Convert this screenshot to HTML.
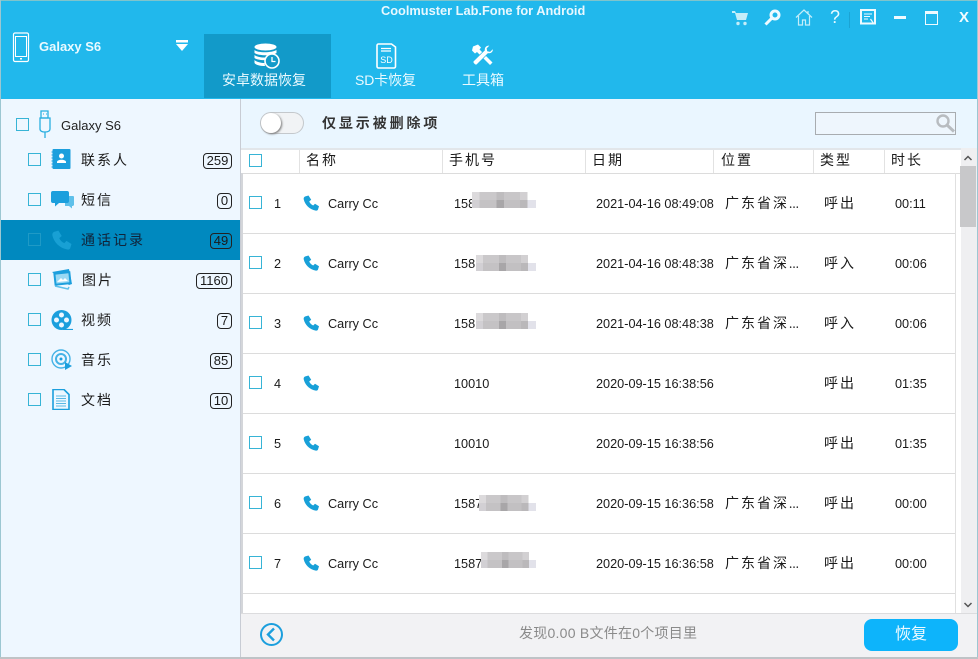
<!DOCTYPE html>
<html><head><meta charset="utf-8">
<style>
html,body{margin:0;padding:0;width:978px;height:659px;overflow:hidden;background:#c8ccd0}
body{font-family:"Liberation Sans","WenQuanYi Zen Hei","Noto Sans CJK SC",sans-serif;color:#1a1a1a;position:relative}
div,span,svg{position:absolute}
.t{white-space:nowrap;line-height:18px}
.cn{font-size:14px;letter-spacing:2px;font-family:"WenQuanYi Zen Hei","Noto Sans CJK SC",sans-serif;margin-top:1px}
.cn i{font-style:normal;letter-spacing:0;font-size:12px}
.h{margin-top:0}
.cb{width:11px;height:11px;border:1px solid #37b4d6;background:#fff}
.cbs{background:transparent}
.bd{height:14px;border:1px solid #222;border-radius:4px;font-size:13px;line-height:14px;text-align:center;background:transparent;box-sizing:content-box}
.l{height:1px;left:243px;width:712px;background:#dcdcdc}
.v{top:150px;width:1px;height:23px;background:#e2e2e2}
.d{font-size:12.7px;margin-top:1px}
.tb{color:#eafaff;font-size:14px;margin-top:1px}
.blur{height:16px;background:linear-gradient(90deg,#dcdadc 0 12%,#cac8ca 12% 38%,#bebcbe 38% 50%,#c8c6c8 50% 75%,#d2d0d2 75% 87%,#fff 87%) top/100% 8px no-repeat,linear-gradient(90deg,#d2d0d4 0 12%,#c4c2c4 12% 38%,#a8a6a8 38% 50%,#c2c0c2 50% 75%,#bab8ba 75% 87%,#e2e2ea 87%) bottom/100% 8px no-repeat}
</style></head><body>
<!-- window -->
<div style="left:0;top:0;width:978px;height:657px;background:#fff"></div>
<div style="left:0;top:0;width:978px;height:99px;background:#21b8ec"></div>
<div style="left:0;top:0;width:978px;height:1px;background:#7fc4cc"></div>
<div style="left:204px;top:34px;width:127px;height:64px;background:#129ac9"></div>
<div class="t" style="left:381px;top:2px;color:#e8f8ff;font-size:12.8px;font-weight:bold">Coolmuster Lab.Fone for Android</div>

<!-- device -->
<svg style="left:12px;top:32px" width="18" height="31" viewBox="0 0 18 31" fill="none" stroke="#fff"><rect x="1.500" y="1" width="15" height="28.500" rx="1.500" stroke-width="1.200"/><rect x="3.500" y="4.500" width="11" height="20" stroke-width="1"/><rect x="8" y="26" width="2" height="1.500" fill="#fff" stroke="none"/></svg>
<div class="t" style="left:39px;top:38px;color:#eafaff;font-size:13px;font-weight:bold">Galaxy S6</div>
<svg style="left:175px;top:39px" width="14" height="14"><rect x="1" y="1" width="12" height="2.500" fill="#fff"/><path d="M1 5h12l-6 7z" fill="#fff"/></svg>

<!-- tabs -->
<svg style="left:254px;top:43px" width="26" height="26" viewBox="0 0 26 26"><ellipse cx="11.500" cy="4" rx="11" ry="3.500" fill="#fff"/><path d="M.5 7c3 3 17 3 22 0v3c-4 3-18 3-22 0zM.5 12c3 2.500 10 3 14 2l-2 3c-5 .5-10-.5-12-2zM.5 17c2 2 7 3 10 3l.5 3c-5 0-9-1-10.500-3z" fill="#fff"/><circle cx="18" cy="18" r="7" fill="#129ac9" stroke="#fff" stroke-width="1.600"/><path d="M18 14v4.500h3.500" fill="none" stroke="#fff" stroke-width="1.300"/></svg>
<div class="t tb" style="left:222px;top:70px">安卓数据恢复</div>
<svg style="left:376px;top:43px" width="21" height="26" viewBox="0 0 21 26" fill="none" stroke="#fff"><path d="M2.500 1h13l4 3v19.500a1.500 1.500 0 0 1-1.500 1.500H2.500A1.500 1.500 0 0 1 1 23.500V2.500A1.500 1.500 0 0 1 2.500 1z" stroke-width="1.600"/><path d="M5 5.500h10M5 8h10" stroke-width="1.200"/><text x="10.500" y="20" font-size="9" fill="#fff" stroke="none" text-anchor="middle" font-family="Liberation Sans">SD</text></svg>
<div class="t tb" style="left:355px;top:70px;letter-spacing:-.1px">SD卡恢复</div>
<svg style="left:471px;top:43px" width="24" height="24" viewBox="0 0 24 24"><path d="M2 3.500l5-2 3 3-1.500 2 13 13-2.500 2.500-13-13-2 1.500-3-3z" fill="#fff"/><path d="M22 5.500l-3 3-2.500-.5-.5-2.500 3-3c-3-.8-6 1.200-5.500 4.800L2.500 18c-1.500 1.500 2 5 3.500 3.500L17 10.500c3.500.7 5.800-2 5-5z" fill="#fff" stroke="#21b8ec" stroke-width=".7"/></svg>
<div class="t tb" style="left:462px;top:70px">工具箱</div>

<!-- window icons -->
<svg style="left:731px;top:10px" width="18" height="16" viewBox="0 0 18 16" fill="#c4edf9"><path d="M1 1h3l1 2h12l-2 7H6L4 3H1z"/><circle cx="7" cy="13.500" r="1.700"/><circle cx="14" cy="13.500" r="1.700"/></svg>
<svg style="left:764px;top:9px" width="17" height="17" viewBox="0 0 17 17"><circle cx="11" cy="6" r="4" fill="none" stroke="#eefaff" stroke-width="3"/><path d="M8 9L1.500 15.500" stroke="#eefaff" stroke-width="3"/></svg>
<svg style="left:795px;top:9px" width="18" height="17" viewBox="0 0 18 17" fill="none" stroke="#c4edf9" stroke-width="1.200"><path d="M1 8.500L9 1l8 7.500M3.500 7v9h4v-5h3v5h4V7M13 2v3"/></svg>
<div class="t" style="left:830px;top:7px;color:#eafaff;font-size:18px;line-height:20px">?</div>
<div style="left:849px;top:12px;width:1px;height:16px;background:#1ba4d4"></div>
<svg style="left:860px;top:9px" width="16" height="16" viewBox="0 0 16 16"><rect x="1" y="1" width="14" height="13.500" fill="none" stroke="#eefaff" stroke-width="2"/><path d="M4 5h8M4 7.500h6M4 10h4" stroke="#eefaff" stroke-width="1"/><path d="M10.500 10l3.500 5" stroke="#eefaff" stroke-width="1.200"/></svg>
<div style="left:894px;top:16px;width:12px;height:3px;background:#eefaff"></div>
<div style="left:925px;top:11px;width:11px;height:10px;border:1px solid #eefaff;border-top:3px solid #eefaff"></div>
<div class="t" style="left:959px;top:9px;color:#f2fcff;font-size:15px;font-weight:bold">X</div>

<!-- left border -->
<div style="left:0;top:0;width:1px;height:657px;background:#9cc7d2"></div>
<div style="left:977px;top:0;width:1px;height:657px;background:#9cc7d2"></div>

<!-- sidebar -->
<div style="left:1px;top:99px;width:239px;height:558px;background:#eef7ff"></div>
<div style="left:240px;top:99px;width:1px;height:558px;background:#c8ccd4"></div>
<div class="cb cbs" style="left:16px;top:118px"></div>
<svg style="left:38px;top:110px" width="15" height="29" viewBox="0 0 15 29" fill="none" stroke="#28aee0" stroke-width="1.300"><path d="M3 1h7v7H3z"/><path d="M2 8h10v11c0 2-2 3-5 3s-5-1-5-3z"/><path d="M7 22v6"/><path d="M5 4h.8M8 4h.8"/></svg>
<div class="t" style="left:61px;top:117px;font-size:13px;color:#222">Galaxy S6</div>

<div style="left:1px;top:220px;width:239px;height:40px;background:#0089bf"></div>

<div class="cb cbs" style="left:28px;top:153px"></div>
<svg style="left:51px;top:149px" width="21" height="21" viewBox="0 0 21 21"><rect x="1.500" y="0" width="18" height="20" rx="1" fill="#1c9fdd"/><path d="M.5 3h2M.5 6h2M.5 9h2M.5 12h2M.5 15h2M.5 18h2" stroke="#1c9fdd"/><circle cx="10.500" cy="7" r="2.500" fill="#fff"/><path d="M6 13c0-3 9-3 9 0v1H6z" fill="#fff"/></svg>
<div class="t cn" style="left:81px;top:150px">联系人</div>
<div class="bd" style="left:203px;top:153px;width:27px">259</div>

<div class="cb cbs" style="left:28px;top:193px"></div>
<svg style="left:51px;top:190px" width="23" height="19" viewBox="0 0 23 19"><path d="M14 6h8a1 1 0 0 1 1 1v8l-1 1h-1v2.500L18 16h-4z" fill="#5ec0ea"/><path d="M2 1h14a2 2 0 0 1 2 2v8a2 2 0 0 1-2 2H8l-4 3.500V13H2a2 2 0 0 1-2-2V3a2 2 0 0 1 2-2z" fill="#1c9fdd"/></svg>
<div class="t cn" style="left:81px;top:190px">短信</div>
<div class="bd" style="left:217px;top:193px;width:13px">0</div>

<div class="cb cbs" style="left:28px;top:233px;border-color:#1f9ac6"></div>
<svg style="left:51px;top:230px" width="21" height="20" viewBox="0 0 16 16"><path d="M2 1.500l3.500-1 2.700 4.300-2 1.700c.8 1.800 2.200 3.200 4 4l1.800-1.800 4 2.500-1 3.300c-.4 1-1.300 1.300-2.300 1.100C6.500 14.500 2 10 .7 4.300.5 3 1 2 2 1.500z" fill="#18a0d4"/></svg>
<div class="t cn" style="left:81px;top:230px;color:#10243a">通话记录</div>
<div class="bd" style="left:210px;top:233px;width:20px">49</div>

<div class="cb cbs" style="left:28px;top:273px"></div>
<svg style="left:51px;top:269px" width="22" height="21" viewBox="0 0 22 21"><path d="M1 3l17-3 3 15-3 1z" fill="#1c9fdd"/><rect x="3" y="3" width="17" height="13" transform="rotate(-6 11 10)" fill="#1c9fdd"/><rect x="5" y="5" width="13" height="9" transform="rotate(-6 11 10)" fill="#9ad9f4"/><path d="M6 13l4-4 2 2 2-2 3 3z" fill="#fff"/><path d="M4 17l13 3 1-2" fill="none" stroke="#5ec0ea" stroke-width="1.500"/></svg>
<div class="t cn" style="left:82px;top:270px">图片</div>
<div class="bd" style="left:196px;top:273px;width:34px">1160</div>

<div class="cb cbs" style="left:28px;top:313px"></div>
<svg style="left:51px;top:310px" width="22" height="20" viewBox="0 0 22 20"><circle cx="10.500" cy="10" r="10" fill="#1c9fdd"/><circle cx="10.500" cy="5" r="2.500" fill="#eef7ff"/><circle cx="10.500" cy="15" r="2.500" fill="#eef7ff"/><circle cx="5.500" cy="10" r="2.500" fill="#eef7ff"/><circle cx="15.500" cy="10" r="2.500" fill="#eef7ff"/><path d="M12 19.500h10" stroke="#1c9fdd" stroke-width="1.200"/></svg>
<div class="t cn" style="left:81px;top:310px">视频</div>
<div class="bd" style="left:217px;top:313px;width:13px">7</div>

<div class="cb cbs" style="left:28px;top:353px"></div>
<svg style="left:51px;top:349px" width="22" height="22" viewBox="0 0 22 22" fill="none" stroke="#45b3e6"><circle cx="10" cy="10" r="9" stroke-width="1.400"/><circle cx="10" cy="10" r="5" stroke-width="2"/><circle cx="10" cy="10" r="1.500" fill="#1c9fdd" stroke="none"/><path d="M14 13l7 4-7 4z" fill="#1c9fdd" stroke="none"/></svg>
<div class="t cn" style="left:81px;top:350px">音乐</div>
<div class="bd" style="left:210px;top:353px;width:20px">85</div>

<div class="cb cbs" style="left:28px;top:393px"></div>
<svg style="left:52px;top:389px" width="18" height="21" viewBox="0 0 18 21"><path d="M1 .5h11l5 5V20.500H1z" fill="#eef7ff" stroke="#1c9fdd" stroke-width="1.600"/><path d="M4 7h10M4 9.500h10M4 12h10M4 14.500h10M4 17h10" stroke="#5ab8e4"/></svg>
<div class="t cn" style="left:81px;top:390px">文档</div>
<div class="bd" style="left:210px;top:393px;width:20px">10</div>

<!-- toolbar -->
<div style="left:241px;top:99px;width:736px;height:49px;background:#eaf6ff"></div>
<div style="left:260px;top:112px;width:42px;height:20px;border:1px solid #c4c8cc;border-radius:11px;background:#f1f3f5"></div>
<div style="left:261px;top:113px;width:20px;height:20px;border-radius:50%;background:#fff;box-shadow:1px 1px 2px #777"></div>
<div class="t" style="left:322px;top:114px;font-size:14px;font-weight:bold;letter-spacing:2.900px;color:#333;font-family:'Noto Sans CJK SC',sans-serif">仅显示被删除项</div>
<div style="left:815px;top:112px;width:139px;height:21px;border:1px solid #a8acb0;background:#eef6fd"></div>
<svg style="left:935px;top:113px" width="21" height="20" viewBox="0 0 21 20" fill="none" stroke="#b8bcc0"><circle cx="8" cy="8" r="5.500" stroke-width="2.400"/><path d="M12 12l7 6.500" stroke-width="3"/></svg>

<!-- grid -->
<div style="left:241px;top:148px;width:736px;height:466px;background:#fff"></div>
<div style="left:241px;top:148px;width:720px;height:2px;background:#e2e6ea"></div>
<div style="left:241px;top:173px;width:2px;height:441px;background:#d4d6da"></div>
<div class="l" style="top:173px;left:243px;width:718px"></div>
<div class="v" style="left:299px"></div><div class="v" style="left:442px"></div><div class="v" style="left:585px"></div><div class="v" style="left:713px"></div><div class="v" style="left:813px"></div><div class="v" style="left:884px"></div>
<div class="cb" style="left:249px;top:154px"></div>
<div class="t cn h" style="left:306px;top:151px">名称</div>
<div class="t cn h" style="left:449px;top:151px">手机号</div>
<div class="t cn h" style="left:592px;top:151px">日期</div>
<div class="t cn h" style="left:721px;top:151px">位置</div>
<div class="t cn h" style="left:820px;top:151px">类型</div>
<div class="t cn h" style="left:891px;top:151px">时长</div>

<div class="l" style="top:233px"></div><div class="l" style="top:293px"></div><div class="l" style="top:353px"></div><div class="l" style="top:413px"></div><div class="l" style="top:473px"></div><div class="l" style="top:533px"></div><div class="l" style="top:593px"></div>
<div style="left:955px;top:173px;width:1px;height:441px;background:#e0e0e0"></div>

<!-- row1 -->
<div class="cb" style="left:249px;top:196px"></div><div class="t d" style="left:274px;top:194px">1</div>
<svg style="left:303px;top:195px" width="16" height="16" viewBox="0 0 16 16"><path d="M2 1.500l3.500-1 2.700 4.300-2 1.700c.8 1.800 2.200 3.200 4 4l1.800-1.800 4 2.500-1 3.300c-.4 1-1.300 1.300-2.300 1.100C6.500 14.500 2 10 .7 4.300.5 3 1 2 2 1.500z" fill="#18a0d8"/></svg>
<div class="t d" style="left:328px;top:194px">Carry Cc</div><div class="t d" style="left:454px;top:194px">158</div><div class="blur" style="left:472px;top:192px;width:64px"></div>
<div class="t d" style="left:596px;top:194px">2021-04-16 08:49:08</div><div class="t cn" style="left:725px;top:193px">广东省深<i>...</i></div><div class="t cn" style="left:824px;top:193px">呼出</div><div class="t d" style="left:895px;top:194px">00:11</div>
<!-- row2 -->
<div class="cb" style="left:249px;top:256px"></div><div class="t d" style="left:274px;top:254px">2</div>
<svg style="left:303px;top:255px" width="16" height="16" viewBox="0 0 16 16"><path d="M2 1.500l3.500-1 2.700 4.300-2 1.700c.8 1.800 2.200 3.200 4 4l1.800-1.800 4 2.500-1 3.300c-.4 1-1.300 1.300-2.300 1.100C6.500 14.500 2 10 .7 4.300.5 3 1 2 2 1.500z" fill="#18a0d8"/></svg>
<div class="t d" style="left:328px;top:254px">Carry Cc</div><div class="t d" style="left:454px;top:254px">158</div><div class="blur" style="left:476px;top:255px;width:60px"></div>
<div class="t d" style="left:596px;top:254px">2021-04-16 08:48:38</div><div class="t cn" style="left:725px;top:253px">广东省深<i>...</i></div><div class="t cn" style="left:824px;top:253px">呼入</div><div class="t d" style="left:895px;top:254px">00:06</div>
<!-- row3 -->
<div class="cb" style="left:249px;top:316px"></div><div class="t d" style="left:274px;top:314px">3</div>
<svg style="left:303px;top:315px" width="16" height="16" viewBox="0 0 16 16"><path d="M2 1.500l3.500-1 2.700 4.300-2 1.700c.8 1.800 2.200 3.200 4 4l1.800-1.800 4 2.500-1 3.300c-.4 1-1.300 1.300-2.300 1.100C6.500 14.500 2 10 .7 4.300.5 3 1 2 2 1.500z" fill="#18a0d8"/></svg>
<div class="t d" style="left:328px;top:314px">Carry Cc</div><div class="t d" style="left:454px;top:314px">158</div><div class="blur" style="left:476px;top:313px;width:60px"></div>
<div class="t d" style="left:596px;top:314px">2021-04-16 08:48:38</div><div class="t cn" style="left:725px;top:313px">广东省深<i>...</i></div><div class="t cn" style="left:824px;top:313px">呼入</div><div class="t d" style="left:895px;top:314px">00:06</div>
<!-- row4 -->
<div class="cb" style="left:249px;top:376px"></div><div class="t d" style="left:274px;top:374px">4</div>
<svg style="left:303px;top:375px" width="16" height="16" viewBox="0 0 16 16"><path d="M2 1.500l3.500-1 2.700 4.300-2 1.700c.8 1.800 2.200 3.200 4 4l1.800-1.800 4 2.500-1 3.300c-.4 1-1.300 1.300-2.300 1.100C6.500 14.500 2 10 .7 4.300.5 3 1 2 2 1.500z" fill="#18a0d8"/></svg>
<div class="t d" style="left:454px;top:374px">10010</div>
<div class="t d" style="left:596px;top:374px">2020-09-15 16:38:56</div><div class="t cn" style="left:824px;top:373px">呼出</div><div class="t d" style="left:895px;top:374px">01:35</div>
<!-- row5 -->
<div class="cb" style="left:249px;top:436px"></div><div class="t d" style="left:274px;top:434px">5</div>
<svg style="left:303px;top:435px" width="16" height="16" viewBox="0 0 16 16"><path d="M2 1.500l3.500-1 2.700 4.300-2 1.700c.8 1.800 2.200 3.200 4 4l1.800-1.800 4 2.500-1 3.300c-.4 1-1.300 1.300-2.300 1.100C6.500 14.500 2 10 .7 4.300.5 3 1 2 2 1.500z" fill="#18a0d8"/></svg>
<div class="t d" style="left:454px;top:434px">10010</div>
<div class="t d" style="left:596px;top:434px">2020-09-15 16:38:56</div><div class="t cn" style="left:824px;top:433px">呼出</div><div class="t d" style="left:895px;top:434px">01:35</div>
<!-- row6 -->
<div class="cb" style="left:249px;top:496px"></div><div class="t d" style="left:274px;top:494px">6</div>
<svg style="left:303px;top:495px" width="16" height="16" viewBox="0 0 16 16"><path d="M2 1.500l3.500-1 2.700 4.300-2 1.700c.8 1.800 2.200 3.200 4 4l1.800-1.800 4 2.500-1 3.300c-.4 1-1.300 1.300-2.300 1.100C6.500 14.500 2 10 .7 4.300.5 3 1 2 2 1.500z" fill="#18a0d8"/></svg>
<div class="t d" style="left:328px;top:494px">Carry Cc</div><div class="t d" style="left:454px;top:494px">1587</div><div class="blur" style="left:479px;top:495px;width:57px"></div>
<div class="t d" style="left:596px;top:494px">2020-09-15 16:36:58</div><div class="t cn" style="left:725px;top:493px">广东省深<i>...</i></div><div class="t cn" style="left:824px;top:493px">呼出</div><div class="t d" style="left:895px;top:494px">00:00</div>
<!-- row7 -->
<div class="cb" style="left:249px;top:556px"></div><div class="t d" style="left:274px;top:554px">7</div>
<svg style="left:303px;top:555px" width="16" height="16" viewBox="0 0 16 16"><path d="M2 1.500l3.500-1 2.700 4.300-2 1.700c.8 1.800 2.200 3.200 4 4l1.800-1.800 4 2.500-1 3.300c-.4 1-1.300 1.300-2.300 1.100C6.500 14.500 2 10 .7 4.300.5 3 1 2 2 1.500z" fill="#18a0d8"/></svg>
<div class="t d" style="left:328px;top:554px">Carry Cc</div><div class="t d" style="left:454px;top:554px">1587</div><div class="blur" style="left:481px;top:552px;width:55px"></div>
<div class="t d" style="left:596px;top:554px">2020-09-15 16:36:58</div><div class="t cn" style="left:725px;top:553px">广东省深<i>...</i></div><div class="t cn" style="left:824px;top:553px">呼出</div><div class="t d" style="left:895px;top:554px">00:00</div>

<!-- scrollbar -->
<div style="left:961px;top:148px;width:16px;height:466px;background:#efeff1"></div>
<div style="left:960px;top:166px;width:16px;height:61px;background:#c8c8ca"></div>
<svg style="left:963px;top:154px" width="10" height="8"><path d="M1.500 6L5 2.500 8.500 6" fill="none" stroke="#555" stroke-width="1.500"/></svg>
<svg style="left:963px;top:601px" width="10" height="8"><path d="M1.500 2L5 5.500 8.500 2" fill="none" stroke="#555" stroke-width="1.500"/></svg>

<!-- footer -->
<div style="left:241px;top:613px;width:736px;height:44px;background:#f2f2f4;border-top:1px solid #dcdcde;box-sizing:border-box"></div>
<svg style="left:259px;top:622px" width="25" height="25" viewBox="0 0 25 25" fill="none" stroke="#1c9fdd"><circle cx="12.500" cy="12.500" r="10.500" stroke-width="2"/><path d="M15 6.500l-6 6 6 6" stroke-width="2.400"/></svg>
<div class="t" style="left:519px;top:624px;font-size:14px;letter-spacing:.25px;color:#8a8a8a;font-family:'Liberation Sans','WenQuanYi Zen Hei',sans-serif">发现0.00 B文件在0个项目里</div>
<div style="left:864px;top:619px;width:94px;height:32px;border-radius:8px;background:#0db4fb"></div>
<div class="t" style="left:864px;top:625px;width:94px;text-align:center;color:#eefaff;font-size:16px;line-height:20px">恢复</div>

<div style="left:0;top:657px;width:978px;height:2px;background:#bfc3c6"></div>
</body></html>
